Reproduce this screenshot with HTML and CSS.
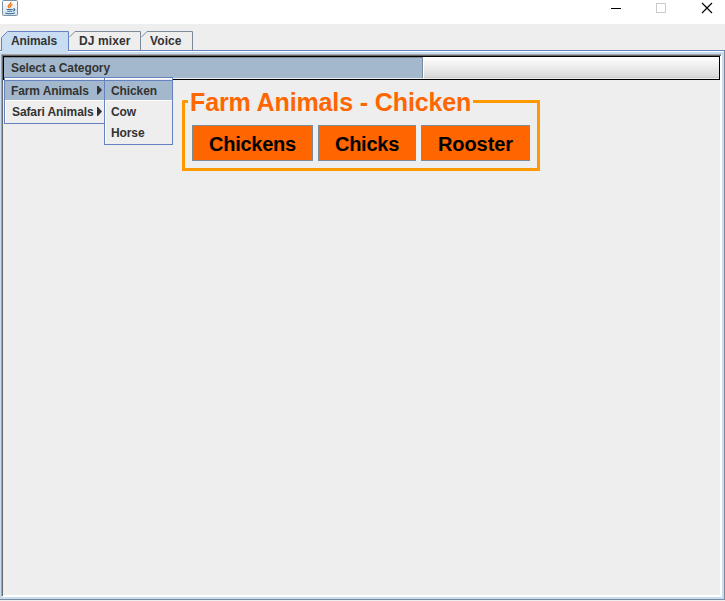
FILE: index.html
```html
<!DOCTYPE html>
<html lang="en">
<head>
<meta charset="utf-8">
<title>Animals</title>
<link rel="stylesheet" href="styles.css">
</head>
<body>
<header class="titlebar">
  <svg class="java" width="16" height="16" viewBox="0 0 16 16">
    <defs><linearGradient id="g" x2="0" y2="1"><stop stop-color="#fff"/><stop offset="1" stop-color="#d4e1ea"/></linearGradient></defs>
    <rect x=".5" y=".5" width="15" height="15" rx="1" fill="url(#g)" stroke="#7891a4"/>
    <path d="M8.800 2C9.500 4 6 4.500 6.300 6.400c.1.8.9 1.200 1.200 1.900M10.500 4.500C8 5.600 8 6.300 8.800 7.200" fill="none" stroke="#f27b22" stroke-width="1.500"/>
    <path d="M4.500 9.500h6.200M5.200 11.300h5M11.300 9c2-.6 2 1.500-.3 2M3.300 13c2 1 7 1 9.500 0" fill="none" stroke="#386f9b" stroke-width="1.100"/>
  </svg>
  <svg class="controls" width="97" height="12" viewBox="0 0 97 12" shape-rendering="crispEdges">
    <path d="M0 6.500h10" stroke="#000"/>
    <rect x="45.500" y="1.500" width="9" height="9" fill="none" stroke="#ccc"/>
    <path d="M91 1l10 10M101 1L91 11" stroke="#000" stroke-width="1.200" shape-rendering="auto"/>
  </svg>
</header>
<nav class="tabs">
  <div class="tab active"><svg width="68" height="20"><path d="M.5 20V6.500L6.500.5H67.500V20" fill="#c8ddf2" stroke="#6382bf"/></svg><span>Animals</span></div>
  <div class="tab dj"><svg width="72" height="20"><path d="M.5 6L6 .5H71.500V20" fill="none" stroke="#7a8a99"/></svg><span>DJ mixer</span></div>
  <div class="tab voice"><svg width="52" height="20"><path d="M.5 6L6 .5H51.500V20" fill="none" stroke="#7a8a99"/></svg><span>Voice</span></div>
</nav>
<main class="pane">
  <div class="bevel">
    <div class="menubar">
      <div class="menu"><span>Select a Category</span></div>
      <div class="popup category">
        <div class="item on"><span class="farm">Farm Animals</span><i></i></div>
        <div class="item"><span class="safari">Safari Animals</span><i></i></div>
      </div>
      <div class="popup animals">
        <div class="item on"><span>Chicken</span></div>
        <div class="item"><span>Cow</span></div>
        <div class="item"><span>Horse</span></div>
      </div>
    </div>
    <section class="group">
      <div class="heading"><b class="stub"></b><h1>Farm Animals - Chicken</h1><b class="rule"></b></div>
      <div class="buttons">
        <button class="b1">Chickens</button><button class="b2">Chicks</button><button class="b3">Rooster</button>
      </div>
    </section>
  </div>
</main>
</body>
</html>
```
FILE: styles.css
```css
* { box-sizing: border-box; }
body { margin: 0; width: 725px; height: 601px; overflow: hidden; background: #eee; color: #333; font: bold 12px/14px "Liberation Sans", Arial, sans-serif; letter-spacing: -.1px; display: flex; flex-direction: column; }
svg { display: block; overflow: visible; }
.titlebar { height: 24px; flex: none; background: #fff; display: flex; justify-content: space-between; padding: 0 17px 0 2px; }
.controls { margin-top: 2px; }
.tabs { display: flex; height: 26px; flex: none; padding: 7px 0 0 1px; }
.tab { position: relative; height: 19px; }
.tab span { position: absolute; left: 10px; top: 3px; white-space: nowrap; }
.tab.dj span { left: 10px; letter-spacing: .1px; }
.tab.voice span { left: 9px; letter-spacing: .1px; }
.active { height: 21px; z-index: 1; }
.active::after { content: ""; position: absolute; left: 1px; top: 19px; width: 66px; height: 3px; background: #c8ddf2; }
.pane { height: 550px; flex: none; border-top: 1px solid #6382bf; border-right: 1px solid #7a8a99; background: linear-gradient(#fff 1px, #c8ddf2 1px, #c8ddf2 548px, #7a8a99 548px, #7a8a99 549px); padding: 3px 2px 3px 1px; margin-bottom: 1px; }
.bevel { height: 543px; background: #eee; border: 1px solid; border-color: #a5a5a5 #fff #fff #a5a5a5; box-shadow: inset 1px 1px #696969, inset -1px -1px #fff; padding: 1px; }
.menubar { position: relative; width: 717px; height: 24px; border: 1px solid #000; background: linear-gradient(#fff, #dadada 20px, #ccc 20px, #ccc 21px, #eee 21px); }
.menu { height: 21px; width: 419px; background: #a3b8cc; border-top: 1px solid #7a8a99; border-right: 1px solid #7a8a99; box-shadow: 1px 0 #fff; padding: 3px 7px; }
.popup { position: absolute; top: 20px; border: 1px solid #6382bf; background: #eee; box-shadow: inset 1px 1px #fff; padding-top: 2px; z-index: 2; }
.category { left: 0; width: 101px; height: 47px; }
.animals { left: 100px; width: 69px; height: 68px; }
.item { height: 21px; display: flex; justify-content: space-between; align-items: center; padding: 1px 1px 0 6px; }
.item.on { background: #a3b8cc; border-top: 1px solid #6382bf; border-bottom: 1px solid #fff; padding-top: 0; }
.safari { margin-left: 1px; }
.item span { white-space: nowrap; }
.item i { width: 5px; height: 9px; margin: 0 1px 1px 0; flex: none; background: #333; clip-path: polygon(0 0, 20% 0, 100% 50%, 20% 100%, 0 100%); }
.category .item span { width: 84px; margin-right: -2px; }
.category .item i { margin-left: auto; }
.group { width: 358px; height: 83px; margin: 8px 0 0 179px; display: flex; flex-direction: column; }
.heading { display: flex; height: 30px; }
.heading b { height: 18px; margin-top: 12px; border-top: 3px solid #f90; }
.stub { width: 6px; border-left: 3px solid #f90; border-radius: 2px 0 0; }
.rule { flex: 1; border-right: 3px solid #f90; border-radius: 0 1px 0 0; }
h1 { width: 285px; margin: 0; padding-left: 2px; font-size: 25px; line-height: 29px; letter-spacing: -.12px; color: #f60; white-space: nowrap; }
.buttons { height: 53px; border: solid #f90; border-width: 0 3px 3px; border-radius: 0 0 1px 1px; padding: 7px 7px 0; display: flex; gap: 5px; }
button { height: 36px; padding: 2px 0 0; border: 1px solid #7a8a99; background: #f60; color: #000; font: bold 20px "Liberation Sans", Arial, sans-serif; }
.b1 { width: 121px; letter-spacing: -.25px; }
.b2 { width: 98px; letter-spacing: -.25px; }
.b3 { width: 109px; letter-spacing: -.05px; }
```
